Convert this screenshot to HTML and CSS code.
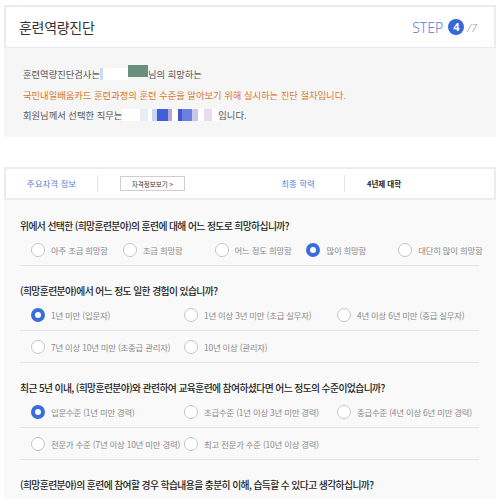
FILE: index.html
```html
<!DOCTYPE html>
<html lang="ko">
	<head>
		<meta charset="UTF-8">
		<meta name="viewport" content="width=device-width, initial-scale=1.0">
		<title>훈련역량진단</title>
		<link rel="stylesheet" href="styles.css">
	</head>

	<body>
		<div class="page">
			<header class="top">
				<h1>훈련역량진단</h1>
				<div class="step">STEP <span class="num">4</span><span class="total">/7</span></div>
			</header>

			<section class="intro">
				<p>훈련역량진단검사는<span class="mask mask-a"></span><span class="mask mask-b"></span>님의 희망하는</p>
				<p class="warn">국민내일배움카드 훈련과정의 훈련 수준을 알아보기 위해 실시하는 진단 절차입니다.</p>
				<p>회원님께서 선택한 직무는<span class="mask mask-c"></span>입니다.</p>
			</section>

			<section class="qual">
				<div class="qual-label">주요자격 정보</div>
				<div class="qual-value"><button class="btn-small">자격정보보기 &gt;</button></div>
				<div class="qual-label">최종 학력</div>
				<div class="qual-value"><b>4년제 대학</b></div>
			</section>

			<section class="survey">
				<div class="q">
					<p class="q-title">위에서 선택한 (희망훈련분야)의 훈련에 대해 어느 정도로 희망하십니까?</p>
					<div class="row cols5">
						<label class="opt"><span class="radio"></span>아주 조금 희망함</label>
						<label class="opt"><span class="radio"></span>조금 희망함</label>
						<label class="opt"><span class="radio"></span>어느 정도 희망함</label>
						<label class="opt"><span class="radio on"></span>많이 희망함</label>
						<label class="opt"><span class="radio"></span>대단히 많이 희망함</label>
					</div>
				</div>

				<div class="q">
					<p class="q-title">(희망훈련분야)에서 어느 정도 일한 경험이 있습니까?</p>
					<div class="row cols3">
						<label class="opt"><span class="radio on"></span>1년 미만 (입문자)</label>
						<label class="opt"><span class="radio"></span>1년 이상 3년 미만 (초급 실무자)</label>
						<label class="opt"><span class="radio"></span>4년 이상 6년 미만 (중급 실무자)</label>
					</div>
					<div class="row cols3">
						<label class="opt"><span class="radio"></span>7년 이상 10년 미만 (초중급 관리자)</label>
						<label class="opt"><span class="radio"></span>10년 이상 (관리자)</label>
					</div>
				</div>

				<div class="q">
					<p class="q-title">최근 5년 이내, (희망훈련분야)와 관련하여 교육훈련에 참여하셨다면 어느 정도의 수준이었습니까?</p>
					<div class="row cols3">
						<label class="opt"><span class="radio on"></span>입문수준 (1년 미만 경력)</label>
						<label class="opt"><span class="radio"></span>초급수준 (1년 이상 3년 미만 경력)</label>
						<label class="opt"><span class="radio"></span>중급수준 (4년 이상 6년 미만 경력)</label>
					</div>
					<div class="row cols3">
						<label class="opt"><span class="radio"></span>전문가 수준 (7년 이상 10년 미만 경력)</label>
						<label class="opt"><span class="radio"></span>최고 전문가 수준 (10년 이상 경력)</label>
					</div>
				</div>

				<div class="q">
					<p class="q-title">(희망훈련분야)의 훈련에 참여할 경우 학습내용을 충분히 이해, 습득할 수 있다고 생각하십니까?</p>
				</div>
			</section>
		</div>
	</body>
</html>
```

FILE: styles.css
```css
* {
	padding: 0;
	margin: 0;
	box-sizing: border-box;
}

body {
	font-family: "Noto Sans CJK KR", "Noto Sans", sans-serif;
	background: #fff;
	color: #333;
}

.page {
	margin: 5px 4px 0;
}

.top {
	height: 43px;
	border: 2px solid #e9ebf3;
	border-bottom-width: 1px;
	display: flex;
	align-items: center;
	justify-content: space-between;
	padding: 0 17px 0 13px;
}

.top h1 {
	font-size: 14px;
	font-weight: 400;
	letter-spacing: -0.3px;
	color: #333;
}

.step {
	display: flex;
	align-items: center;
	font-family: "Noto Sans", sans-serif;
	font-size: 14px;
	font-weight: 300;
	color: #5c80de;
}

.step .num {
	width: 16px;
	height: 16px;
	border-radius: 50%;
	background: #3966d6;
	color: #fff;
	font-size: 11px;
	font-weight: 700;
	line-height: 16px;
	text-align: center;
	margin-left: 5px;
}

.step .total {
	font-size: 11px;
	font-style: italic;
	color: #999;
	margin-left: 3px;
}

.intro {
	height: 89px;
	background: #f6f6f7;
	padding: 16px 0 0 19px;
	font-size: 9.3px;
	line-height: 20.5px;
	color: #555;
}

.intro .warn {
	color: #d6782c;
}

.mask {
	display: inline-block;
	height: 12px;
	vertical-align: -2px;
}

.mask-a {
	width: 28px;
	background: linear-gradient(to right, #c8dcf2 0 3px, #fff 3px);
}

.mask-b {
	width: 20px;
	background: #6a8f7d;
	vertical-align: 1px;
}

.mask-c {
	width: 96px;
	background: linear-gradient(to right, #fff 0 18px, #e8eef8 18px 26px, #fff 26px 30px, #c9d6f2 30px 35px, #3e5fd8 35px 46px, #b9a6d6 46px 50px, #fff 50px 56px, #4a56c8 56px 60px, #6a7fe0 60px 70px, #ccc6ea 70px 76px, #fff 76px 82px, #eadcf0 82px 90px, #fff 90px);
}

.qual {
	margin-top: 30px;
	height: 33px;
	border: 2px solid #ececec;
	display: grid;
	grid-template-columns: 92px 154px 93px 1fr;
	align-items: center;
}

.qual-label {
	text-align: center;
	font-size: 8.5px;
	color: #5b7fd8;
	border-right: 1px solid #e6e6e6;
	line-height: 17px;
}

.qual-value {
	padding-left: 22px;
	font-size: 7.5px;
	color: #222;
}

.btn-small {
	width: 65px;
	height: 15px;
	border: 1px solid #cfcfcf;
	background: #fff;
	font-family: inherit;
	font-size: 6.5px;
	color: #333;
}

.survey {
	background: #f9f9f9;
	padding: 19px 17px 20px 16px;
}

.q + .q {
	margin-top: 18px;
}

.q-title {
	font-size: 9.8px;
	font-weight: 500;
	line-height: 15px;
	letter-spacing: -0.6px;
	color: #222;
}

.row {
	display: grid;
	height: 32px;
	border-bottom: 1px solid #e4e4e4;
	align-items: center;
}

.cols5 {
	grid-template-columns: repeat(5, minmax(0, 1fr));
}

.cols3 {
	grid-template-columns: repeat(3, minmax(0, 1fr));
}

.opt {
	display: flex;
	align-items: center;
	padding-left: 11px;
	font-size: 8.4px;
	letter-spacing: -0.2px;
	color: #888;
	white-space: nowrap;
}

.radio {
	width: 14px;
	height: 14px;
	border-radius: 50%;
	border: 1.5px solid #c6c6c6;
	background: #fff;
	margin-right: 6px;
	flex: none;
}

.radio.on {
	border: 4px solid #3a6cdc;
}
```
